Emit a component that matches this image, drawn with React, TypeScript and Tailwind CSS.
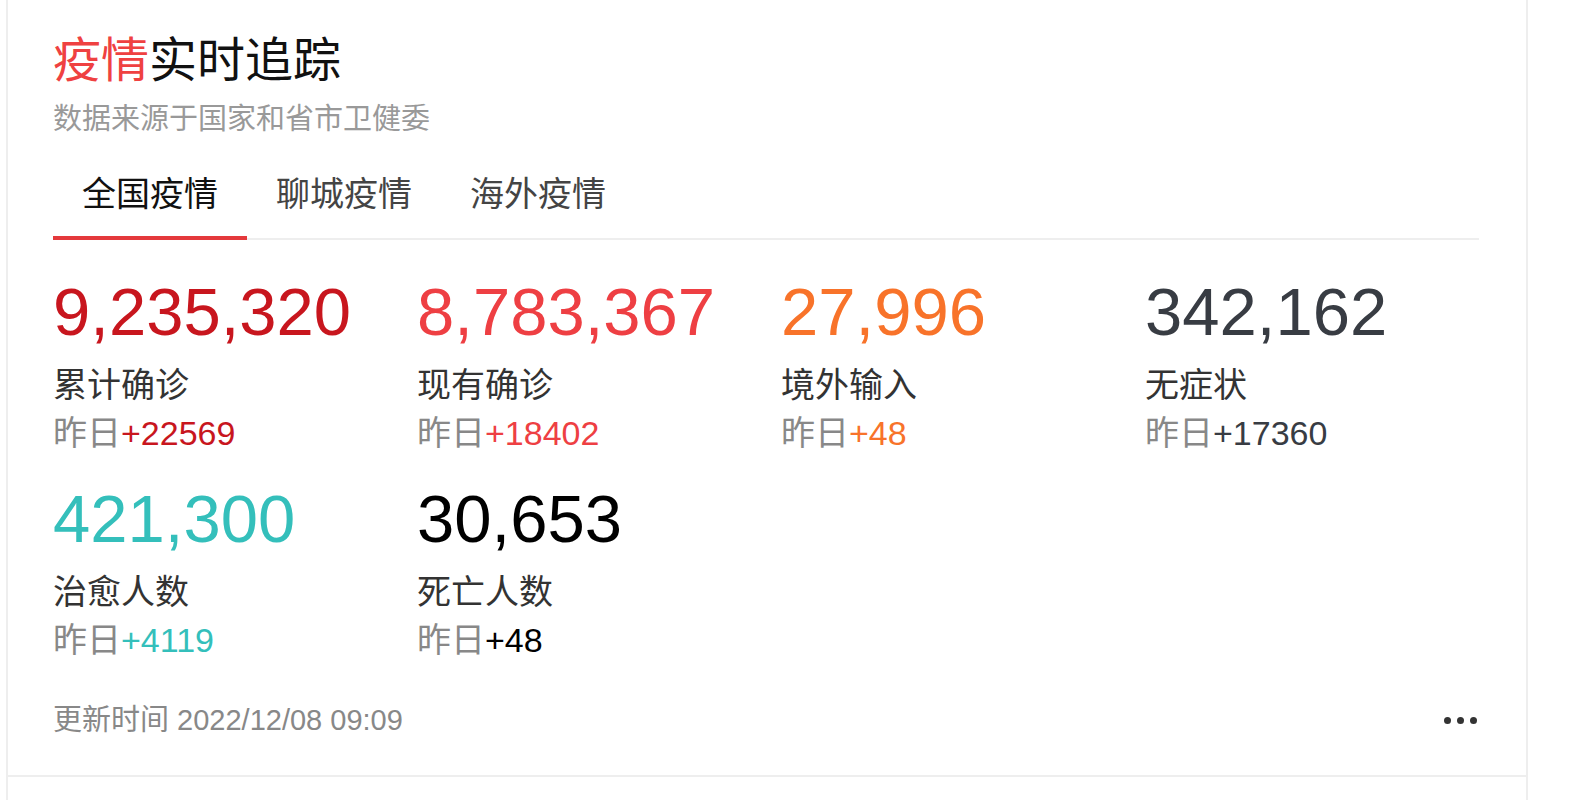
const font = "font-['Liberation_Sans','Noto_Sans_CJK_SC',sans-serif]";

const stats = [
  { value: "9,235,320", label: "累计确诊", delta: "+22569", color: "text-[#c8161e]" },
  { value: "8,783,367", label: "现有确诊", delta: "+18402", color: "text-[#ee3f43]" },
  { value: "27,996", label: "境外输入", delta: "+48", color: "text-[#f8732a]" },
  { value: "342,162", label: "无症状", delta: "+17360", color: "text-[#383c43]" },
  { value: "421,300", label: "治愈人数", delta: "+4119", color: "text-[#34bfbb]" },
  { value: "30,653", label: "死亡人数", delta: "+48", color: "text-[#000000]" },
];

const tabs = ["全国疫情", "聊城疫情", "海外疫情"];

function Stat({ s }: { s: (typeof stats)[number] }) {
  return (
    <div className="flex flex-col">
      <div className={`text-[67px] leading-[72px] ${s.color}`}>{s.value}</div>
      <div className="mt-[17px] text-[34px] leading-[40px] text-[#333]">{s.label}</div>
      <div className="mt-[8px] text-[34px] leading-[40px] text-[#888]">
        昨日<span className={s.color}>{s.delta}</span>
      </div>
    </div>
  );
}

export default function App() {
  return (
    <div className={`min-h-screen bg-white pl-[6px] ${font}`}>
      <div className="w-[1522px] h-[777px] border-x-2 border-b-2 border-[#eeeeee] pl-[45px] pt-[33px]">
        <h1 className="text-[48px] leading-[56px] text-[#111]">
          <span className="text-[#ef4141]">疫情</span>实时追踪
        </h1>
        <p className="mt-[12px] text-[29px] leading-[36px] text-[#999]">数据来源于国家和省市卫健委</p>

        <div className="mt-[37px] flex w-[1426px] border-b-2 border-[#eeeeee]">
          {tabs.map((t, i) => (
            <div
              key={t}
              className={`w-[194px] pb-[22px] text-center text-[34px] leading-[40px] ${
                i === 0 ? "-mb-[2px] border-b-4 border-[#e4393c] text-[#111]" : "text-[#444]"
              }`}
            >
              {t}
            </div>
          ))}
        </div>

        <div className="mt-[36px] grid grid-cols-[repeat(4,364px)] gap-y-[30px]">
          {stats.map((s) => (
            <Stat key={s.label} s={s} />
          ))}
        </div>

        <div className="mt-[42px] flex w-[1426px] items-center justify-between">
          <span className="text-[29px] leading-[36px] text-[#888]">更新时间 2022/12/08 09:09</span>
          <div className="mr-[2px] flex gap-[6px]">
            <span className="h-[7px] w-[7px] rounded-full bg-[#333]" />
            <span className="h-[7px] w-[7px] rounded-full bg-[#333]" />
            <span className="h-[7px] w-[7px] rounded-full bg-[#333]" />
          </div>
        </div>
      </div>
      <div className="w-[1522px] h-[40px] border-x-2 border-[#eeeeee]" />
    </div>
  );
}
